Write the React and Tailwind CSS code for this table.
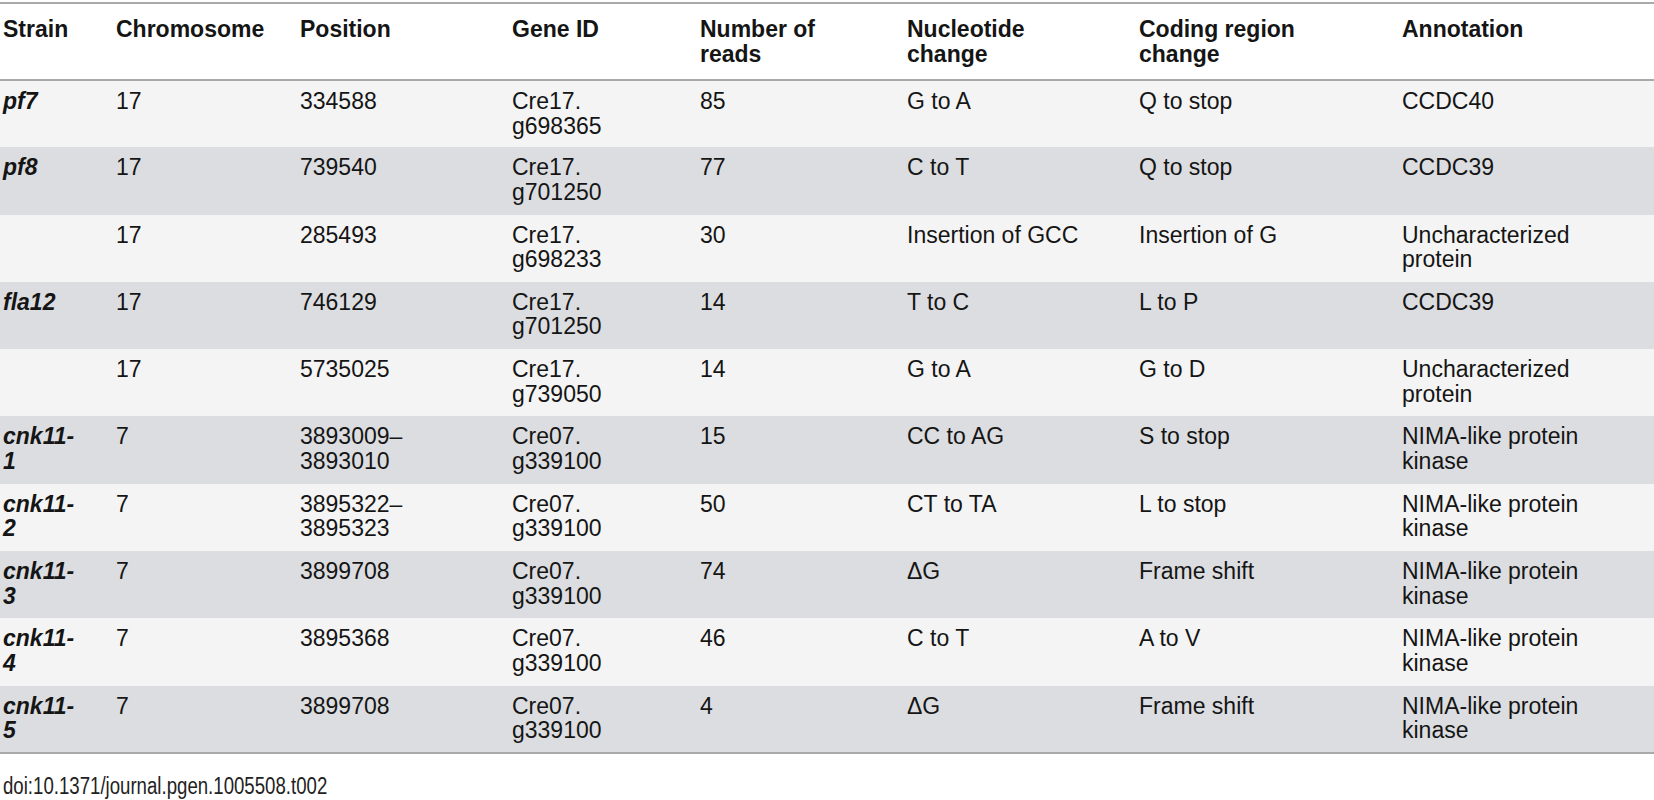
import React from 'react';

const rows = [
  { strain: ['pf7'], chr: '17', pos: ['334588'], gene: ['Cre17.', 'g698365'], reads: '85', nuc: 'G to A', cod: 'Q to stop', ann: ['CCDC40'] },
  { strain: ['pf8'], chr: '17', pos: ['739540'], gene: ['Cre17.', 'g701250'], reads: '77', nuc: 'C to T', cod: 'Q to stop', ann: ['CCDC39'] },
  { strain: [], chr: '17', pos: ['285493'], gene: ['Cre17.', 'g698233'], reads: '30', nuc: 'Insertion of GCC', cod: 'Insertion of G', ann: ['Uncharacterized', 'protein'] },
  { strain: ['fla12'], chr: '17', pos: ['746129'], gene: ['Cre17.', 'g701250'], reads: '14', nuc: 'T to C', cod: 'L to P', ann: ['CCDC39'] },
  { strain: [], chr: '17', pos: ['5735025'], gene: ['Cre17.', 'g739050'], reads: '14', nuc: 'G to A', cod: 'G to D', ann: ['Uncharacterized', 'protein'] },
  { strain: ['cnk11-', '1'], chr: '7', pos: ['3893009–', '3893010'], gene: ['Cre07.', 'g339100'], reads: '15', nuc: 'CC to AG', cod: 'S to stop', ann: ['NIMA-like protein', 'kinase'] },
  { strain: ['cnk11-', '2'], chr: '7', pos: ['3895322–', '3895323'], gene: ['Cre07.', 'g339100'], reads: '50', nuc: 'CT to TA', cod: 'L to stop', ann: ['NIMA-like protein', 'kinase'] },
  { strain: ['cnk11-', '3'], chr: '7', pos: ['3899708'], gene: ['Cre07.', 'g339100'], reads: '74', nuc: 'ΔG', cod: 'Frame shift', ann: ['NIMA-like protein', 'kinase'] },
  { strain: ['cnk11-', '4'], chr: '7', pos: ['3895368'], gene: ['Cre07.', 'g339100'], reads: '46', nuc: 'C to T', cod: 'A to V', ann: ['NIMA-like protein', 'kinase'] },
  { strain: ['cnk11-', '5'], chr: '7', pos: ['3899708'], gene: ['Cre07.', 'g339100'], reads: '4', nuc: 'ΔG', cod: 'Frame shift', ann: ['NIMA-like protein', 'kinase'] },
];

const headers = [['Strain'], ['Chromosome'], ['Position'], ['Gene ID'], ['Number of', 'reads'], ['Nucleotide', 'change'], ['Coding region', 'change'], ['Annotation']];

const Lines = ({ items }) => items.map((l, i) => <div key={i}>{l}</div>);

const td = 'h-[67.3px] align-top pl-[3px] pt-[8px] whitespace-nowrap';

export default function App() {
  return (
    <div className="bg-white w-[1654px] h-[800px] font-['Liberation_Sans',Arial,sans-serif] text-[23px] leading-[24.5px] text-[#151515]">
      <div className="pt-[2px]">
        <table className="w-full table-fixed border-collapse border-t-2 border-b-2 border-[#a9a9a9]">
          <colgroup>
            <col className="w-[113px]" />
            <col className="w-[184px]" />
            <col className="w-[212px]" />
            <col className="w-[188px]" />
            <col className="w-[207px]" />
            <col className="w-[232px]" />
            <col className="w-[263px]" />
            <col />
          </colgroup>
          <thead>
            <tr className="border-b-2 border-[#a9a9a9]">
              {headers.map((h, i) => (
                <th key={i} className="h-[77px] align-top text-left font-bold pl-[3px] pt-[13px] whitespace-nowrap">
                  <Lines items={h} />
                </th>
              ))}
            </tr>
          </thead>
          <tbody>
            {rows.map((r, i) => (
              <tr key={i} className={i % 2 === 0 ? 'bg-[#f4f4f4]' : 'bg-[#dcdde0]'}>
                <td className={td + ' font-bold italic'}><Lines items={r.strain} /></td>
                <td className={td}>{r.chr}</td>
                <td className={td}><Lines items={r.pos} /></td>
                <td className={td}><Lines items={r.gene} /></td>
                <td className={td}>{r.reads}</td>
                <td className={td}>{r.nuc}</td>
                <td className={td}>{r.cod}</td>
                <td className={td}><Lines items={r.ann} /></td>
              </tr>
            ))}
          </tbody>
        </table>
      </div>
      <div className="mt-[20px] pl-[3px]">
        <span className="inline-block origin-left scale-x-[0.81] text-[#222]">doi:10.1371/journal.pgen.1005508.t002</span>
      </div>
    </div>
  );
}
